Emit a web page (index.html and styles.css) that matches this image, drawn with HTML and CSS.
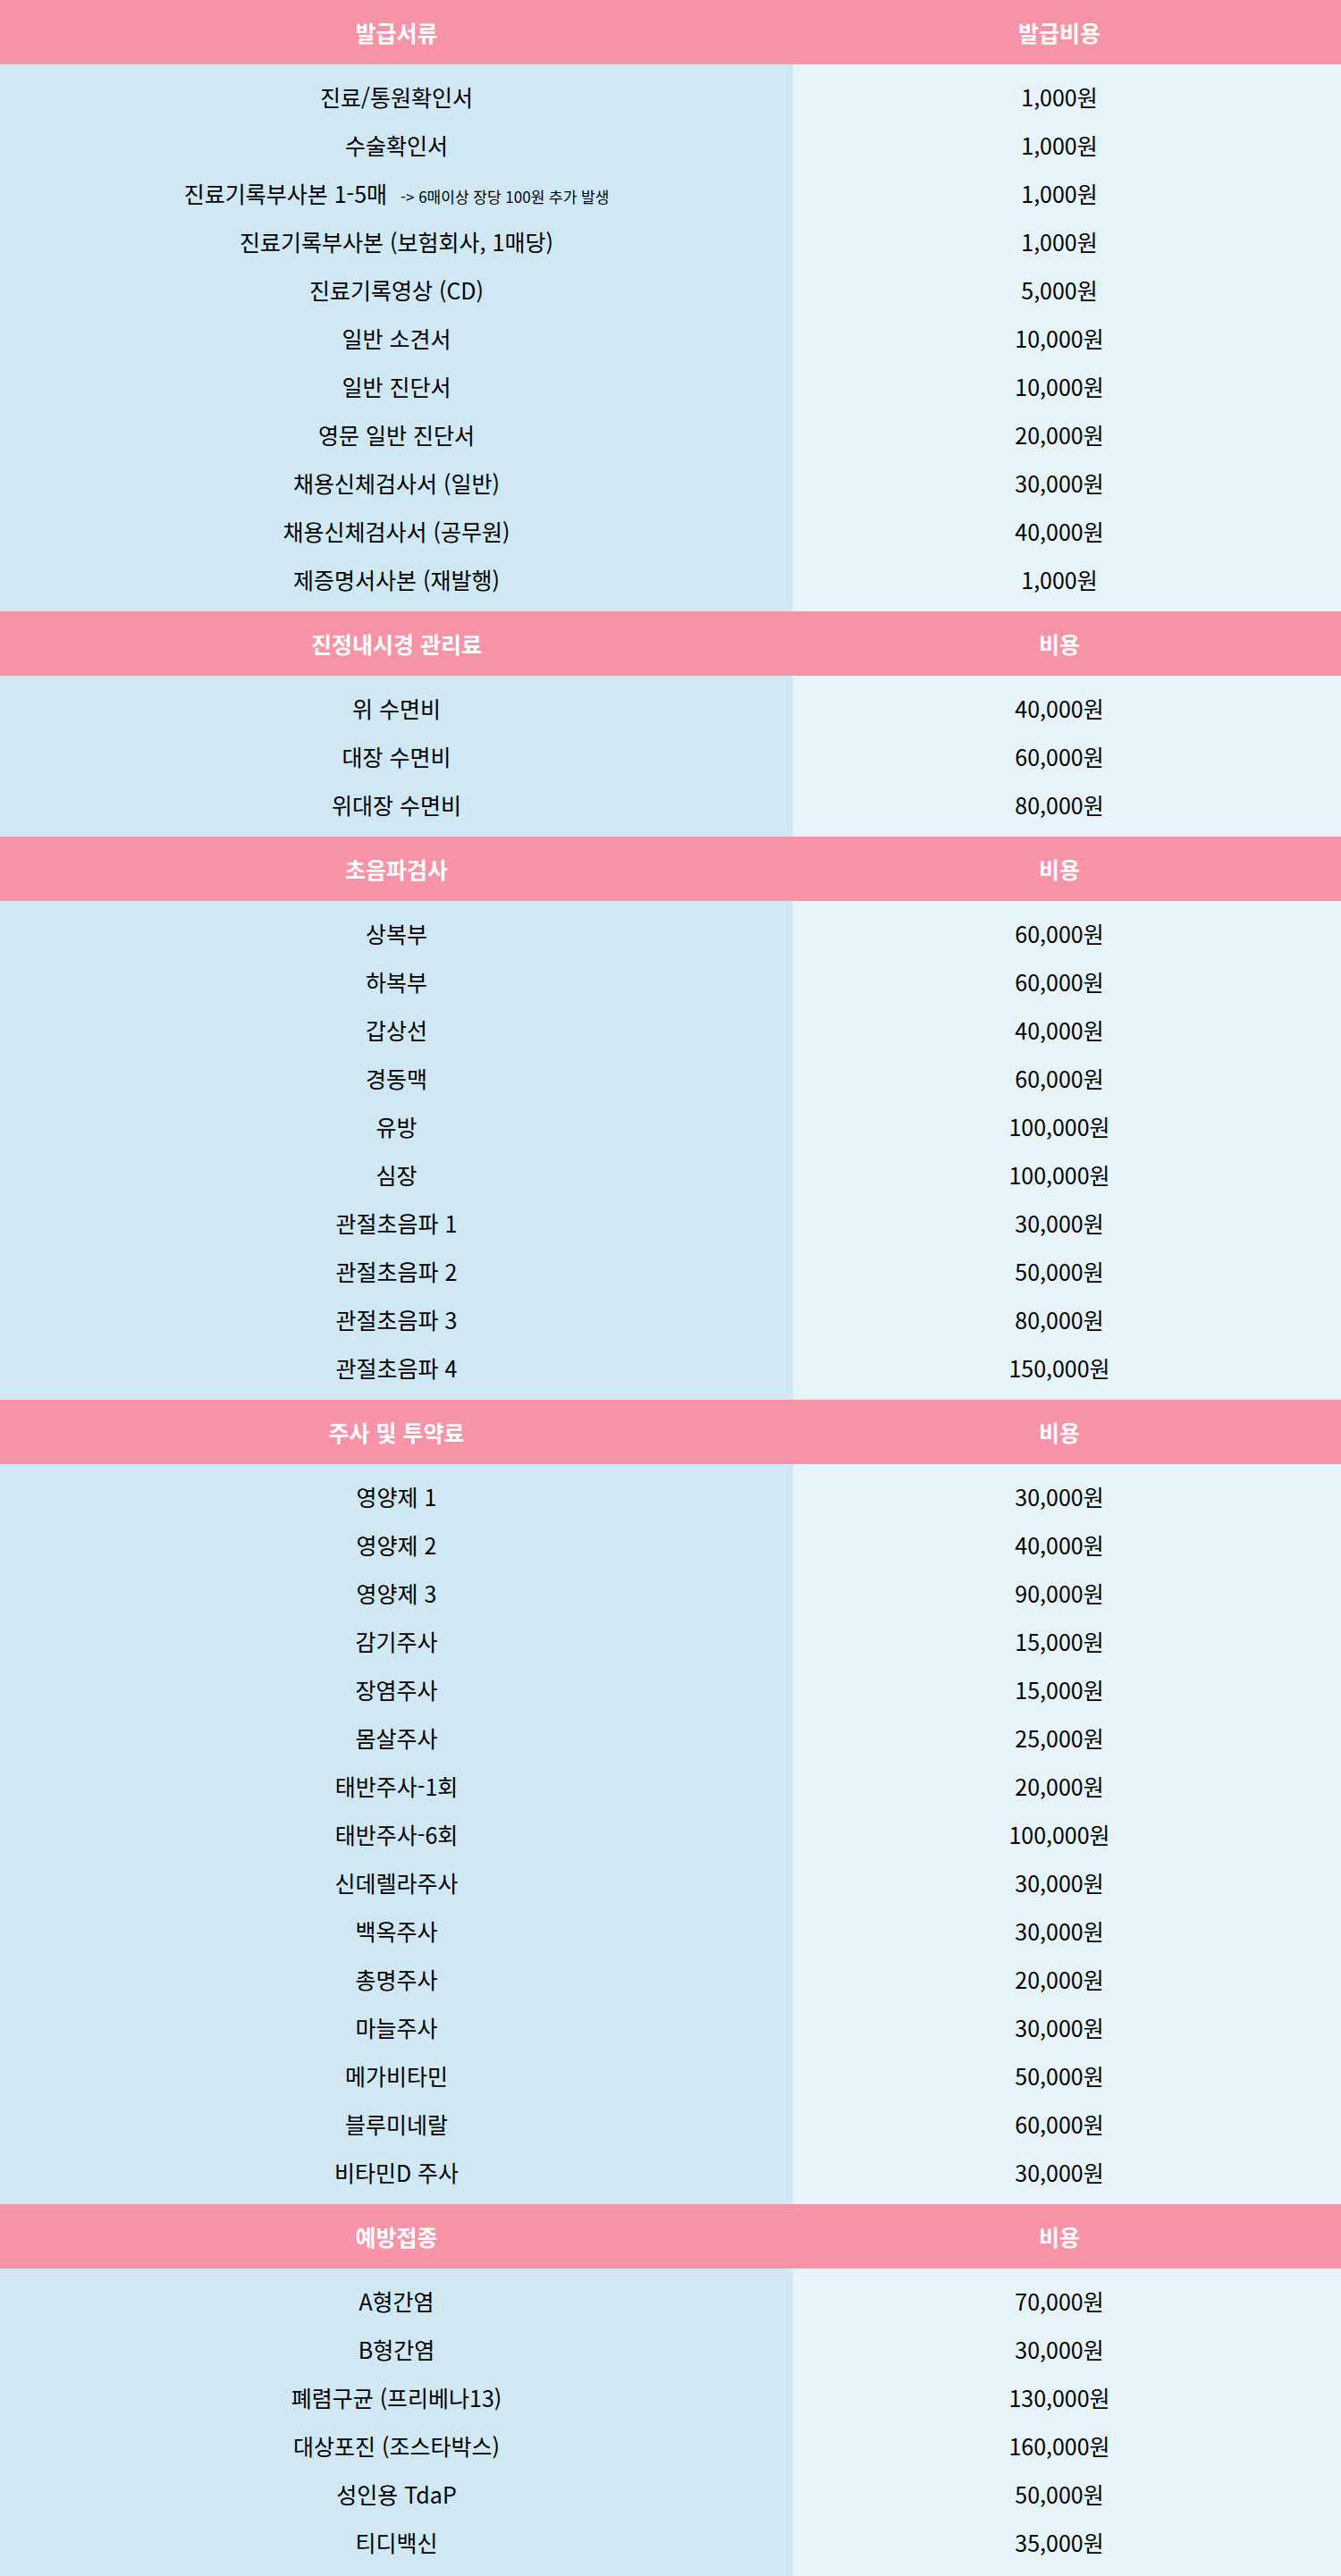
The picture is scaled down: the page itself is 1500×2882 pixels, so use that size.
FILE: index.html
```html
<!DOCTYPE html>
<html lang="ko">
<head>
<meta charset="utf-8">
<title>비급여 항목 안내</title>
<link rel="stylesheet" href="styles.css">
</head>
<body>
<main class="price-table">

  <section class="group">
    <div class="head"><div class="cell name">발급서류</div><div class="cell cost">발급비용</div></div>
    <div class="body">
      <div class="row"><div class="cell name">진료/통원확인서</div><div class="cell cost">1,000원</div></div>
      <div class="row"><div class="cell name">수술확인서</div><div class="cell cost">1,000원</div></div>
      <div class="row"><div class="cell name">진료기록부사본 1-5매 <span class="note">-&gt; 6매이상 장당 100원 추가 발생</span></div><div class="cell cost">1,000원</div></div>
      <div class="row"><div class="cell name">진료기록부사본 (보험회사, 1매당)</div><div class="cell cost">1,000원</div></div>
      <div class="row"><div class="cell name">진료기록영상 (CD)</div><div class="cell cost">5,000원</div></div>
      <div class="row"><div class="cell name">일반 소견서</div><div class="cell cost">10,000원</div></div>
      <div class="row"><div class="cell name">일반 진단서</div><div class="cell cost">10,000원</div></div>
      <div class="row"><div class="cell name">영문 일반 진단서</div><div class="cell cost">20,000원</div></div>
      <div class="row"><div class="cell name">채용신체검사서 (일반)</div><div class="cell cost">30,000원</div></div>
      <div class="row"><div class="cell name">채용신체검사서 (공무원)</div><div class="cell cost">40,000원</div></div>
      <div class="row"><div class="cell name">제증명서사본 (재발행)</div><div class="cell cost">1,000원</div></div>
    </div>
  </section>

  <section class="group">
    <div class="head"><div class="cell name">진정내시경 관리료</div><div class="cell cost">비용</div></div>
    <div class="body">
      <div class="row"><div class="cell name">위 수면비</div><div class="cell cost">40,000원</div></div>
      <div class="row"><div class="cell name">대장 수면비</div><div class="cell cost">60,000원</div></div>
      <div class="row"><div class="cell name">위대장 수면비</div><div class="cell cost">80,000원</div></div>
    </div>
  </section>

  <section class="group">
    <div class="head"><div class="cell name">초음파검사</div><div class="cell cost">비용</div></div>
    <div class="body">
      <div class="row"><div class="cell name">상복부</div><div class="cell cost">60,000원</div></div>
      <div class="row"><div class="cell name">하복부</div><div class="cell cost">60,000원</div></div>
      <div class="row"><div class="cell name">갑상선</div><div class="cell cost">40,000원</div></div>
      <div class="row"><div class="cell name">경동맥</div><div class="cell cost">60,000원</div></div>
      <div class="row"><div class="cell name">유방</div><div class="cell cost">100,000원</div></div>
      <div class="row"><div class="cell name">심장</div><div class="cell cost">100,000원</div></div>
      <div class="row"><div class="cell name">관절초음파 1</div><div class="cell cost">30,000원</div></div>
      <div class="row"><div class="cell name">관절초음파 2</div><div class="cell cost">50,000원</div></div>
      <div class="row"><div class="cell name">관절초음파 3</div><div class="cell cost">80,000원</div></div>
      <div class="row"><div class="cell name">관절초음파 4</div><div class="cell cost">150,000원</div></div>
    </div>
  </section>

  <section class="group">
    <div class="head"><div class="cell name">주사 및 투약료</div><div class="cell cost">비용</div></div>
    <div class="body">
      <div class="row"><div class="cell name">영양제 1</div><div class="cell cost">30,000원</div></div>
      <div class="row"><div class="cell name">영양제 2</div><div class="cell cost">40,000원</div></div>
      <div class="row"><div class="cell name">영양제 3</div><div class="cell cost">90,000원</div></div>
      <div class="row"><div class="cell name">감기주사</div><div class="cell cost">15,000원</div></div>
      <div class="row"><div class="cell name">장염주사</div><div class="cell cost">15,000원</div></div>
      <div class="row"><div class="cell name">몸살주사</div><div class="cell cost">25,000원</div></div>
      <div class="row"><div class="cell name">태반주사-1회</div><div class="cell cost">20,000원</div></div>
      <div class="row"><div class="cell name">태반주사-6회</div><div class="cell cost">100,000원</div></div>
      <div class="row"><div class="cell name">신데렐라주사</div><div class="cell cost">30,000원</div></div>
      <div class="row"><div class="cell name">백옥주사</div><div class="cell cost">30,000원</div></div>
      <div class="row"><div class="cell name">총명주사</div><div class="cell cost">20,000원</div></div>
      <div class="row"><div class="cell name">마늘주사</div><div class="cell cost">30,000원</div></div>
      <div class="row"><div class="cell name">메가비타민</div><div class="cell cost">50,000원</div></div>
      <div class="row"><div class="cell name">블루미네랄</div><div class="cell cost">60,000원</div></div>
      <div class="row"><div class="cell name">비타민D 주사</div><div class="cell cost">30,000원</div></div>
    </div>
  </section>

  <section class="group">
    <div class="head"><div class="cell name">예방접종</div><div class="cell cost">비용</div></div>
    <div class="body last">
      <div class="row"><div class="cell name">A형간염</div><div class="cell cost">70,000원</div></div>
      <div class="row"><div class="cell name">B형간염</div><div class="cell cost">30,000원</div></div>
      <div class="row"><div class="cell name">폐렴구균 (프리베나13)</div><div class="cell cost">130,000원</div></div>
      <div class="row"><div class="cell name">대상포진 (조스타박스)</div><div class="cell cost">160,000원</div></div>
      <div class="row"><div class="cell name">성인용 TdaP</div><div class="cell cost">50,000원</div></div>
      <div class="row"><div class="cell name">티디백신</div><div class="cell cost">35,000원</div></div>
    </div>
  </section>

</main>
</body>
</html>
```

FILE: styles.css
```css
html, body {
  margin: 0;
  padding: 0;
}

body {
  font-family: "Noto Sans CJK KR", "Noto Sans", sans-serif;
  color: #000;
  background: #e6f4fa;
}

.price-table {
  display: flex;
  flex-direction: column;
}

.head,
.row {
  display: grid;
  grid-template-columns: 887px 1fr;
}

.head {
  height: 72px;
  background: #f693a7;
  color: #fff;
  font-weight: 700;
  font-size: 25px;
  align-items: center;
}

.body {
  padding: 9px 0;
  background: linear-gradient(to right, #d0e8f4 887px, #e6f4fa 887px);
}

.body.last {
  padding-bottom: 11px;
}

.row {
  height: 54px;
  font-size: 25px;
  align-items: center;
}

.cell {
  text-align: center;
  white-space: nowrap;
}

.cost {
  padding-right: 17px;
}

.note {
  font-size: 17px;
  margin-left: 8px;
}
```
